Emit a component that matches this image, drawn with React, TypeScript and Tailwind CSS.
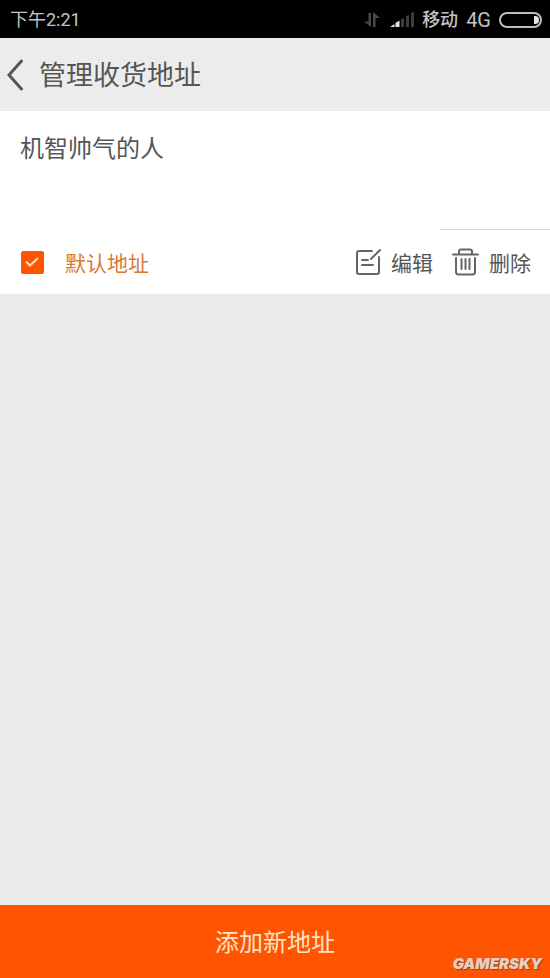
import { useState } from 'react';

function StatusBar() {
  return (
    <div className="flex h-[38px] items-center justify-between bg-black pt-px pr-2 pl-[10px] font-[Roboto,'Noto_Sans_CJK_SC',sans-serif] text-[18px] leading-6 text-[#c4c4c4]">
      <span>下午2:21</span>
      <div className="flex items-center">
        {/* Data transfer arrows */}
        <svg className="mr-[10px] h-4 w-4" viewBox="0 0 16 16" fill="#484848">
          <path d="M4.500 1H7v14L0 9.500h4.500zM9 15h2.500V6H16L9 0z" />
        </svg>
        {/* Signal */}
        <svg className="mr-2 h-4 w-6" viewBox="0 0 24 16">
          <path d="M0 15l4.500-3v3zM5.500 11l4-2.500V15h-4z" fill="#e4e4e4" />
          <path d="M11 7l3-1v9h-3zM16 4l3-1v12h-3zM21 1l3-1v15h-3z" fill="#3d3d3d" />
        </svg>
        <span className="mr-2 font-medium">移动</span>
        <span className="mr-2 text-[20px]">4G</span>
        {/* Battery */}
        <svg className="h-4 w-[43px]" viewBox="0 0 43 16" fill="none">
          <rect x="1" y="1" width="41" height="14" rx="7" stroke="#bdbdbd" strokeWidth="2" />
          <path d="M35 4h1a4 4 0 0 1 0 8h-1z" fill="#e4e4e4" />
        </svg>
      </div>
    </div>
  );
}

function EditIcon() {
  return (
    <svg className="h-7 w-[26px]" viewBox="0 0 26 28" fill="none" stroke="#666" strokeWidth="2" strokeLinecap="round">
      <path d="M17 3H4a2 2 0 0 0-2 2v19a2 2 0 0 0 2 2h18a2 2 0 0 0 2-2V9" />
      <path d="M25 2l-9 9M7 12h6M7 17h11" />
    </svg>
  );
}

function TrashIcon() {
  return (
    <svg className="h-7 w-7" viewBox="0 0 28 28" fill="none" stroke="#666" strokeWidth="2" strokeLinecap="round">
      <path d="M2 6.500h25M8 6V3.500A2 2 0 0 1 10 1.500h9a2 2 0 0 1 2 2V6" />
      <path d="M5 10v14a2.500 2.500 0 0 0 2.500 2.500h14A2.500 2.500 0 0 0 24 24V10M10.500 11v10M14.500 11v10M18.500 11v10" />
    </svg>
  );
}

export default function App() {
  const [isDefault, setIsDefault] = useState(true);

  return (
    <div className="flex min-h-screen flex-col bg-[#ebebeb] font-['Noto_Sans_CJK_SC',sans-serif] text-[#555]">
      <StatusBar />

      <header className="flex h-[73px] items-center gap-4 bg-[#ececec] pl-[7px]">
        <button type="button" aria-label="返回">
          <svg className="h-8 w-4" viewBox="0 0 16 32" fill="none" stroke="#555" strokeWidth="3" strokeLinecap="round">
            <path d="M14.500 2L2 16L14.500 30" />
          </svg>
        </button>
        <h1 className="pb-px text-[27px] leading-10 font-normal">管理收货地址</h1>
      </header>

      <section className="bg-white">
        <h2 className="px-5 pt-4 pb-[62px] text-[24px] leading-10 font-normal">机智帅气的人</h2>
        <div className="ml-auto h-px w-1/5 bg-[#d9d9d9]" />

        <div className="flex h-16 items-center justify-between pr-[19px] pl-5 text-[21px] leading-8">
          <label className="flex items-center gap-[21px] text-[#d97834]">
            <span className="grid h-6 w-6 place-items-center">
              <input
                type="checkbox"
                checked={isDefault}
                onChange={(e) => setIsDefault(e.target.checked)}
                className="peer col-start-1 row-start-1 h-[23px] w-[23px] appearance-none rounded-[2px] border border-[#ff5500] checked:bg-[#ff5500]"
              />
              <svg
                className="pointer-events-none invisible col-start-1 row-start-1 h-[10px] w-[14px] peer-checked:visible"
                viewBox="0 0 14 10"
                fill="none"
                stroke="#ffdcc4"
                strokeWidth="2"
              >
                <path d="M1 4.500L5 8.500L13 1" />
              </svg>
            </span>
            默认地址
          </label>

          <div className="flex items-center gap-[18px]">
            <button type="button" className="flex items-center gap-[10px]">
              <EditIcon />
              编辑
            </button>
            <button type="button" className="flex items-center gap-[10px]">
              <TrashIcon />
              删除
            </button>
          </div>
        </div>
      </section>

      <footer className="relative mt-auto">
        <button type="button" className="h-[73px] w-full bg-[#ff5500] pb-px text-[24px] leading-10 text-[#ffe3c8]">
          添加新地址
        </button>
        <span className="absolute right-2 bottom-1 font-[Inter,sans-serif] text-[15px] leading-5 font-black text-[#e9cfc0] italic [text-shadow:1px_1px_1px_#8a4a2a]">
          GAMERSKY
        </span>
      </footer>
    </div>
  );
}
